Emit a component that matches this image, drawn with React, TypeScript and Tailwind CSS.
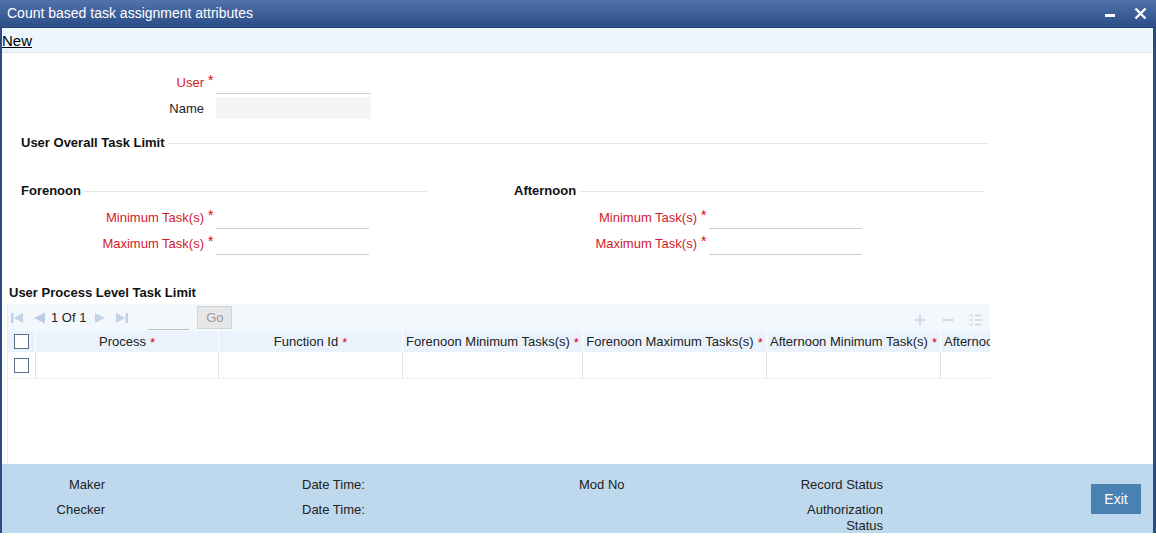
import React from "react";

const RED = "text-[#d11a2a]";

function Star() {
  return <span className="text-[#e00010] text-[14px] leading-none relative top-[-2px]">*</span>;
}

function FieldRow({
  label,
  required,
  labelW,
  inputW,
  shaded,
  h = "h-[24px]",
}: {
  label: string;
  required?: boolean;
  labelW: string;
  inputW: string;
  shaded?: boolean;
  h?: string;
}) {
  return (
    <div className={`flex items-stretch ${h}`}>
      <div className={`${labelW} flex items-center justify-end pt-[2px] ${required ? RED : "text-[#222]"}`}>
        {label}
      </div>
      <div className="w-[12px] flex items-center pl-[4px]">{required ? <Star /> : null}</div>
      <div className={`${inputW} ${shaded ? "bg-[#f5f5f5]" : "border-b border-[#cfcfcf]"}`} />
    </div>
  );
}

function Checkbox() {
  return <div className="w-[15px] h-[15px] border border-[#5a6f87] bg-white" />;
}

export default function App() {
  const cols: { label: string; w: string; left?: boolean }[] = [
    { label: "Process", w: "w-[183px]" },
    { label: "Function Id", w: "w-[184px]" },
    { label: "Forenoon Minimum Tasks(s)", w: "w-[180px]" },
    { label: "Forenoon Maximum Tasks(s)", w: "w-[184px]" },
    { label: "Afternoon Minimum Task(s)", w: "w-[174px]" },
    { label: "Afternoon Maximum Task(s)", w: "w-[50px]", left: true },
  ];

  return (
    <div
      className="w-[1156px] h-[541px] bg-white text-[13px] text-[#222] overflow-hidden"
      style={{ fontFamily: '"Liberation Sans", Arial, sans-serif' }}
    >
      <div className="w-[1156px] h-[533px] flex flex-col">
        {/* Title bar */}
        <div className="h-[28px] flex items-center bg-gradient-to-b from-[#5073ac] to-[#2c4d87] border-b border-[#24406f] pl-[7px] pr-[9px]">
          <div className="text-white text-[14px] flex-1 leading-none pb-[2px]">
            Count based task assignment attributes
          </div>
          <div className="flex items-center gap-[18px]">
            <svg width="12" height="12" viewBox="0 0 12 12">
              <rect x="1" y="6" width="10" height="3" fill="white" />
            </svg>
            <svg width="13" height="13" viewBox="0 0 13 13">
              <path d="M1.5 1.5 L11.5 11.5 M11.5 1.5 L1.5 11.5" stroke="white" strokeWidth="2.4" />
            </svg>
          </div>
        </div>

        {/* Window body */}
        <div className="flex-1 flex flex-col border-l-2 border-r-[3px] border-[#2c4b82]">
          {/* Menu */}
          <div className="h-[25px] bg-[#edf5fe] border-b border-[#dfe4ea] flex items-center">
            <span className="text-[15px] underline text-black leading-none">New</span>
          </div>

          {/* Content */}
          <div className="flex-1 flex flex-col">
            <div className="pt-[17px] flex flex-col gap-[3px]">
              <FieldRow label="User" required labelW="w-[202px]" inputW="w-[155px]" h="h-[24px]" />
              <FieldRow label="Name" labelW="w-[202px]" inputW="w-[155px]" shaded h="h-[22px]" />
            </div>

            {/* Overall */}
            <div className="mt-[14px] h-[20px] flex items-center pl-[19px] pr-[165px]">
              <span className="font-bold text-[13px] text-[#111]">User Overall Task Limit</span>
              <div className="flex-1 border-t border-[#e6e6e6] ml-[3px]" />
            </div>

            <div className="mt-[28px] flex pl-[19px]">
              {/* Forenoon */}
              <div className="w-[493px] flex flex-col">
                <div className="h-[20px] flex items-center w-[406px]">
                  <span className="font-bold text-[#111]">Forenoon</span>
                  <div className="flex-1 border-t border-[#e6e6e6] ml-[3px]" />
                </div>
                <div className="mt-[4px] flex flex-col gap-[2px]">
                  <FieldRow label="Minimum Task(s)" required labelW="w-[183px]" inputW="w-[153px]" />
                  <FieldRow label="Maximum Task(s)" required labelW="w-[183px]" inputW="w-[153px]" />
                </div>
              </div>
              {/* Afternoon */}
              <div className="w-[480px] flex flex-col">
                <div className="h-[20px] flex items-center w-[470px]">
                  <span className="font-bold text-[#111]">Afternoon</span>
                  <div className="flex-1 border-t border-[#e6e6e6] ml-[3px]" />
                </div>
                <div className="mt-[4px] flex flex-col gap-[2px]">
                  <FieldRow label="Minimum Task(s)" required labelW="w-[183px]" inputW="w-[153px]" />
                  <FieldRow label="Maximum Task(s)" required labelW="w-[183px]" inputW="w-[153px]" />
                </div>
              </div>
            </div>

            {/* Process level */}
            <div className="mt-[28px] h-[20px] flex items-center pl-[7px]">
              <span className="font-bold text-[#111]">User Process Level Task Limit</span>
            </div>

            <div className="mt-[1px] ml-[5px] w-[983px] flex-1 flex flex-col border-l border-[#eef1f4]">
              {/* Toolbar */}
              <div className="h-[27px] bg-[#f3f8fd] flex items-center">
                <div className="flex items-center h-full pl-[3px]">
                  <svg width="12" height="12" viewBox="0 0 12 12" className="mr-[10px]">
                    <rect x="0" y="1" width="2.5" height="10" fill="#c3d3e6" />
                    <path d="M12 1 L3 6 L12 11 Z" fill="#c3d3e6" />
                  </svg>
                  <svg width="12" height="12" viewBox="0 0 12 12" className="mr-[6px]">
                    <path d="M12 0.5 L1 6 L12 11.5 Z" fill="#b9cce2" />
                  </svg>
                  <span className="text-[#222] pt-[1px]">1 Of 1</span>
                  <svg width="10" height="12" viewBox="0 0 10 12" className="ml-[9px]">
                    <path d="M0 1 L10 6 L0 11 Z" fill="#c3d3e6" />
                  </svg>
                  <svg width="12" height="12" viewBox="0 0 12 12" className="ml-[11px]">
                    <path d="M0 1 L9 6 L0 11 Z" fill="#c3d3e6" />
                    <rect x="9.5" y="1" width="2.5" height="10" fill="#c3d3e6" />
                  </svg>
                  <div className="ml-[20px] w-[41px] h-[24px] border-b border-[#bdbdbd]" />
                  <div className="ml-[8px] w-[35px] h-[23px] bg-[#e7e7e7] border border-[#d2d2d2] flex items-center justify-center text-[#9a9a9a]">
                    Go
                  </div>
                </div>
                <div className="flex-1" />
                <div className="flex items-center gap-[16px] pr-[8px] pt-[4px]">
                  <svg width="12" height="12" viewBox="0 0 12 12">
                    <path d="M6 0.5 V11.5 M0.5 6 H11.5" stroke="#cbd9e8" strokeWidth="2" />
                  </svg>
                  <svg width="12" height="12" viewBox="0 0 12 12">
                    <path d="M0.5 6 H11.5" stroke="#cbd9e8" strokeWidth="2" />
                  </svg>
                  <svg width="12" height="12" viewBox="0 0 12 12">
                    <path d="M0 1.5 H3 M5 1.5 H12 M0 6 H3 M5 6 H12 M0 10.5 H3 M5 10.5 H12" stroke="#cbd9e8" strokeWidth="1.6" />
                  </svg>
                </div>
              </div>

              {/* Header */}
              <div className="h-[21px] bg-[#eaf3fc] flex overflow-hidden">
                <div className="w-[28px] shrink-0 flex items-center justify-center border-r border-white">
                  <Checkbox />
                </div>
                {cols.map((c) => (
                  <div
                    key={c.label}
                    className={`${c.w} shrink-0 flex items-center whitespace-nowrap overflow-hidden border-r border-white ${c.left ? "justify-start pl-[3px]" : "justify-center"}`}
                  >
                    <span className="shrink-0">{c.label}</span>
                    <span className="shrink-0 ml-[4px] text-[#e00010] text-[13px] relative top-[1px]">*</span>
                  </div>
                ))}
              </div>

              {/* Data row */}
              <div className="h-[27px] flex border-b border-[#f6ebe6]">
                <div className="w-[28px] shrink-0 flex items-center justify-center border-r border-[#dfe4ea]">
                  <Checkbox />
                </div>
                {cols.map((c, i) => (
                  <div
                    key={c.label}
                    className={`${c.w} shrink-0 ${i < cols.length - 1 ? "border-r border-[#dfe4ea]" : ""}`}
                  />
                ))}
              </div>
              <div className="flex-1" />
            </div>
          </div>

          {/* Footer */}
          <div className="h-[69px] bg-[#bed9ed] flex pt-[13px] text-[13px] text-[#222]">
            <div className="grid grid-cols-[103px_197px_277px_180px_124px] gap-y-[9px] leading-[16px] content-start">
              <div className="text-right">Maker</div>
              <div />
              <div>Date Time:</div>
              <div>Mod No</div>
              <div className="text-right">Record Status</div>
              <div className="text-right">Checker</div>
              <div />
              <div>Date Time:</div>
              <div />
              <div className="text-right">
                Authorization
                <br />
                Status
              </div>
            </div>
            <div className="flex-1" />
            <div className="mt-[7px] mr-[12px] w-[50px] h-[30px] bg-[#4a81b3] text-white text-[14px] flex items-center justify-center">
              Exit
            </div>
          </div>
        </div>
      </div>
    </div>
  );
}
